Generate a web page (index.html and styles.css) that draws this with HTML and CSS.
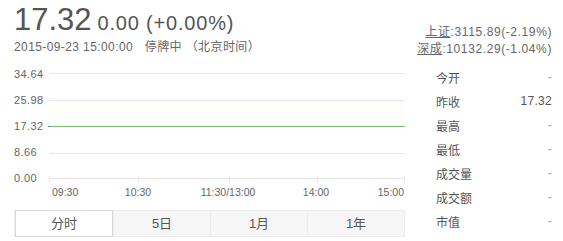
FILE: index.html
```html
<!DOCTYPE html>
<html lang="zh-CN">
<head>
    <meta charset="UTF-8">
    <title>行情</title>
    <link rel="stylesheet" href="styles.css">
</head>
<body>
    <div class="quote">
        <div class="head">
            <div class="price-block">
                <div class="price-line">
                    <span class="price">17.32</span>
                    <span class="change">0.00 (+0.00%)</span>
                </div>
                <div class="time-line">
                    <span>2015-09-23 15:00:00</span>
                    <span class="status">停牌中</span>
                    <span>（北京时间）</span>
                </div>
            </div>
            <div class="indexes">
                <div><a href="#">上证</a>:3115.89(-2.19%)</div>
                <div><a href="#">深成</a>:10132.29(-1.04%)</div>
            </div>
        </div>

        <div class="main">
            <div class="chart-col">
                <svg class="chart" width="392" height="137" viewBox="0 0 392 137">
                    <rect x="35" y="37.5" width="356" height="26" fill="#fefefa"/>
                    <g stroke="#e8e8e8" stroke-width="1">
                        <line x1="35" y1="10.5" x2="391" y2="10.5"/>
                        <line x1="35" y1="37.5" x2="391" y2="37.5"/>
                        <line x1="35" y1="90.5" x2="391" y2="90.5"/>
                        <line x1="35" y1="115.5" x2="391" y2="115.5"/>
                        <line x1="35.5" y1="113" x2="35.5" y2="120"/>
                        <line x1="124.5" y1="113" x2="124.5" y2="120"/>
                        <line x1="215.5" y1="113" x2="215.5" y2="120"/>
                        <line x1="303.5" y1="113" x2="303.5" y2="120"/>
                        <line x1="390.5" y1="113" x2="390.5" y2="120"/>
                    </g>
                    <line x1="35" y1="63.5" x2="391" y2="63.5" stroke="#74b874" stroke-width="1"/>
                    <rect x="34" y="63" width="2" height="1" fill="#3a78c4"/>
                    <g class="axis-y">
                        <text x="0" y="15">34.64</text>
                        <text x="0" y="41">25.98</text>
                        <text x="0" y="67">17.32</text>
                        <text x="0" y="93">8.66</text>
                        <text x="0" y="119">0.00</text>
                    </g>
                    <g class="axis-x">
                        <text x="38" y="133">09:30</text>
                        <text x="124" y="133" text-anchor="middle">10:30</text>
                        <text x="214" y="133" text-anchor="middle">11:30/13:00</text>
                        <text x="302" y="133" text-anchor="middle">14:00</text>
                        <text x="390" y="133" text-anchor="end">15:00</text>
                    </g>
                </svg>
                <div class="tabs">
                    <span class="tab active">分时</span>
                    <span class="tab">5日</span>
                    <span class="tab">1月</span>
                    <span class="tab">1年</span>
                </div>
            </div>

            <table class="stats">
                <tr><td>今开</td><td class="val empty">-</td></tr>
                <tr><td>昨收</td><td class="val">17.32</td></tr>
                <tr><td>最高</td><td class="val empty">-</td></tr>
                <tr><td>最低</td><td class="val empty">-</td></tr>
                <tr><td>成交量</td><td class="val empty">-</td></tr>
                <tr><td>成交额</td><td class="val empty">-</td></tr>
                <tr><td>市值</td><td class="val empty">-</td></tr>
            </table>
        </div>
    </div>
</body>
</html>
```

FILE: styles.css
```css
* {
    margin: 0;
    padding: 0;
    box-sizing: border-box;
}

body {
    background: #fff;
    font-family: 'Liberation Sans', 'Noto Sans CJK SC', sans-serif;
    color: #666;
}

.quote {
    width: 563px;
    height: 241px;
    padding: 3px 11px 0 14px;
}

.head {
    display: flex;
    justify-content: space-between;
    height: 60px;
}

.price-line {
    display: flex;
    align-items: baseline;
    height: 33px;
}

.price {
    font-size: 31px;
    line-height: 33px;
    color: #555;
}

.change {
    font-size: 20px;
    letter-spacing: 0.8px;
    margin-left: 6px;
    color: #555;
}

.time-line {
    font-size: 12px;
    line-height: 18px;
    letter-spacing: 0.4px;
    margin-top: 2px;
}

.status {
    margin-left: 8px;
}

.indexes {
    padding-top: 21px;
    font-size: 12px;
    line-height: 17px;
    letter-spacing: 0.6px;
    text-align: right;
}

.indexes a {
    color: #666;
    text-decoration: underline;
}

.main {
    display: flex;
    justify-content: space-between;
}

.chart {
    display: block;
}

.chart text {
    font-family: 'Liberation Sans', sans-serif;
    fill: #666;
}

.axis-y text {
    font-size: 11px;
    letter-spacing: 0.4px;
}

.axis-x text {
    font-size: 10.5px;
}

.tabs {
    display: flex;
    width: 391px;
    height: 27px;
    margin-top: 10px;
    background: #f6f6f6;
    border: 1px solid #ececec;
}

.tab {
    flex: 1;
    text-align: center;
    font-size: 13px;
    line-height: 25px;
    color: #555;
    border-left: 1px solid #ececec;
}

.tab:first-child {
    border-left: none;
}

.tab.active {
    background: #fff;
    border: 1px solid #d8d8d8;
    margin: -1px 0;
}

.stats {
    width: 116px;
    border-collapse: collapse;
    font-size: 12px;
    color: #555;
    margin-top: 2px;
    align-self: flex-start;
}

.stats td {
    height: 24px;
    padding: 0;
}

.stats .val {
    text-align: right;
    letter-spacing: 0.3px;
}

.stats .empty {
    color: #aaa;
}
```
